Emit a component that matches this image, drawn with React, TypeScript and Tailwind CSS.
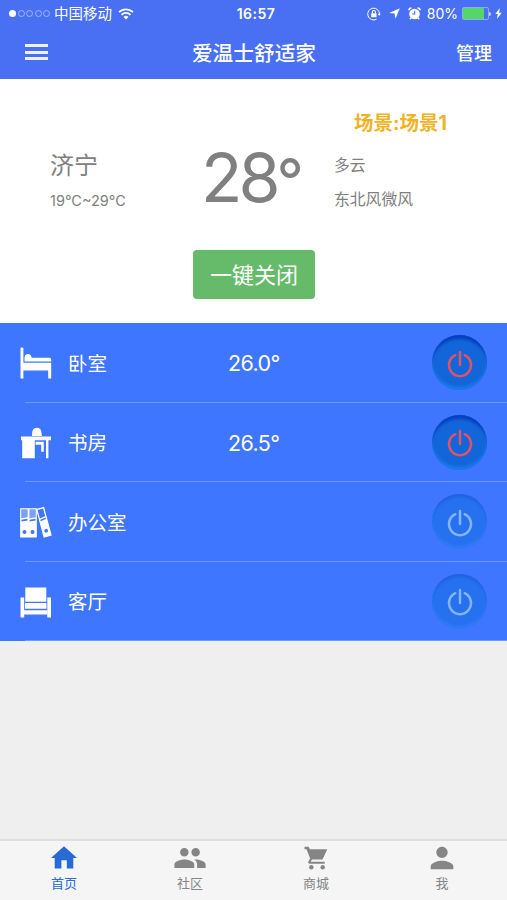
import { useState } from "react";
import type { ReactNode } from "react";
import { MdGroup, MdPerson } from "react-icons/md";

const BedIcon = () => (
  <svg width="32" height="32" viewBox="0 0 32 32" fill="white">
    <path d="M.5 1.500Q.5.5 1.900.5t1.500 1V15.800h27.800v15.700h-3V23.500H3.400v8H.5z" />
    <path d="M4.500 11C4.500 8.500 6 7 8 7s3.500 1.500 3.600 3.700h18q1.600 0 1.600 1.600v2.300H4.500z" />
  </svg>
);

const DeskIcon = () => (
  <svg width="32" height="32" viewBox="0 0 32 32" fill="white">
    <path d="M12 9V7.500Q12.200 5.500 12.300 4.500a4.600 4.600 0 0 1 9 0Q21.400 6 21.800 7.500V9z" />
    <path d="M1 9.500h30v3.700H1zM2.200 13h12.600v18.200H2.200z" />
    <path d="M15.600 14.700h8.200v10.100h-2.600v-7h-5.600zM26 13h2.400v18.200H26z" />
  </svg>
);

const BindersIcon = () => (
  <svg width="32" height="33" viewBox="0 0 32 33" fill="none" stroke="white">
    <path d="M.8 2.800h7.300v28H.8zM8.900 2.800h7.300v28H8.900z" strokeWidth="1.300" />
    <path d="M1 15.500l7-1v16.500H1zM9 15.500l7-1v16.500H9z" fill="white" stroke="none" />
    <path d="M2 4h5v7.700l-5 .8zM10 4h5v7.700l-5 .8z" fill="white" fillOpacity=".3" stroke="none" />
    <path d="M1 13l7-1M9 13l7-1" strokeWidth="1.500" />
    <circle cx="4.500" cy="26" r="2" fill="#3f76ff" stroke="none" />
    <circle cx="12.500" cy="26" r="2" fill="#3f76ff" stroke="none" />
    <g transform="rotate(-15 24 16)">
      <path d="M20.300 2h7v28.500h-7z" strokeWidth="1.300" />
      <path d="M20.300 14.500l7-1v17h-7z" fill="white" stroke="none" />
      <path d="M20.300 12.300l7-1" strokeWidth="1.500" />
      <circle cx="23.800" cy="25" r="1.900" fill="#3f76ff" stroke="none" />
    </g>
  </svg>
);

const SofaIcon = () => (
  <svg width="32" height="32" viewBox="0 0 32 32" fill="white">
    <path d="M5.300 1.500h21v14.300h-21zM5 17h21.500v5.700H5zM4 24.200h23.500v4.300H4z" />
    <path d="M.5 11.500h3.700v20H.5zM27.300 11.500H31v20h-3.700z" />
  </svg>
);

const WifiIcon = () => (
  <svg width="16" height="12" viewBox="0 0 16 12" fill="none" stroke="white" strokeWidth="1.700">
    <path d="M1 4.200a10 10 0 0 1 14 0M3.500 6.800a6.400 6.400 0 0 1 9 0" />
    <path d="M5.500 9a3.600 3.600 0 0 1 5 0L8 11.500z" fill="white" stroke="none" />
  </svg>
);

const RotationLockIcon = () => (
  <svg width="14" height="14" viewBox="0 0 14 14" fill="none" stroke="white">
    <path d="M9.500 12.200A5.900 5.900 0 1 1 12.500 7.500" strokeWidth="1" />
    <path d="M10.700 6.700h3L12.200 9z" fill="white" stroke="none" />
    <path d="M4.200 6.300h5.300v3.900H4.200z" fill="white" stroke="none" />
    <path d="M5.400 6.500V5a1.500 1.500 0 0 1 3 0v1.500" strokeWidth="1.100" />
  </svg>
);

const LocationIcon = () => (
  <svg width="11" height="11" viewBox="0 0 11 11" fill="white">
    <path d="M10.800.2L6.500 10.700 5.600 5.500.2 5z" />
  </svg>
);

const AlarmIcon = () => (
  <svg width="13" height="13" viewBox="0 0 12 12" fill="none" stroke="white">
    <circle cx="6" cy="6.500" r="4.900" fill="white" stroke="none" />
    <path d="M.8 3Q1 1 3.200.9M11.200 3Q11 1 8.800.9M2.800 10l-1 1.300M9.200 10l1 1.300" strokeWidth="1.500" />
    <path d="M6.200 3.500v3H4" stroke="#496ff2" strokeWidth="1" />
  </svg>
);

const BoltIcon = () => (
  <svg width="7" height="11" viewBox="0 0 7 11" fill="white">
    <path d="M4.800 0L.3 6h2.500L2 11l4.700-6.300H4.100z" />
  </svg>
);

const HomeIcon = () => (
  <svg width="26" height="23" viewBox="0 0 26 23" fill="currentColor">
    <path d="M13 .3L26 12h-3.700v10.600h-6.500v-8.300h-5.400v8.300H3.700V12H0z" />
  </svg>
);

const CartIcon = () => (
  <svg width="24" height="24" viewBox="0 0 24 24" fill="currentColor">
    <path d="M.5.800h4.200l1.200 2.500h17.400L18.500 13.500H8l-1.300 2.200h14v2H5.500q-2-.3-1.200-2.100l1.800-3L2.500 3.300h-2z" />
    <circle cx="7.300" cy="21.200" r="2.200" />
    <circle cx="18.700" cy="21.200" r="2.200" />
  </svg>
);

type Room = { name: string; temp: string; on: boolean; icon: ReactNode };

const initialRooms: Room[] = [
  { name: "卧室", temp: "26.0°", on: true, icon: <BedIcon /> },
  { name: "书房", temp: "26.5°", on: true, icon: <DeskIcon /> },
  { name: "办公室", temp: "", on: false, icon: <BindersIcon /> },
  { name: "客厅", temp: "", on: false, icon: <SofaIcon /> },
];

const tabs = [
  { label: "首页", icon: <HomeIcon /> },
  { label: "社区", icon: <MdGroup size={34} /> },
  { label: "商城", icon: <CartIcon /> },
  { label: "我", icon: <MdPerson size={34} /> },
];

function PowerButton({ on, onClick }: { on: boolean; onClick: () => void }) {
  return (
    <button
      type="button"
      onClick={onClick}
      className={`mt-px flex size-[55px] items-center justify-center rounded-full ${
        on
          ? "bg-[#1366d9] shadow-[inset_0_6px_3px_-2px_#0640bf,inset_0_-4px_3px_-1px_#1b7bea]"
          : "bg-[#2671ef] shadow-[inset_0_5px_3px_-2px_#2260e2,inset_0_-4px_3px_-1px_#2f7bf8]"
      }`}
    >
      <svg
        width="26"
        height="28"
        viewBox="0 0 26 28"
        fill="none"
        stroke={on ? "#dc5468" : "#86b4fb"}
        strokeWidth="2.500"
        strokeLinecap="round"
        className="mt-0.5"
      >
        <path d="M13 2v13M8.300 5.200a11 11 0 1 0 9.400 0" />
      </svg>
    </button>
  );
}

export default function App() {
  const [rooms, setRooms] = useState(initialRooms);
  const [activeTab, setActiveTab] = useState(0);

  const toggleRoom = (index: number) =>
    setRooms((prev) => prev.map((room, i) => (i === index ? { ...room, on: !room.on } : room)));

  const closeAll = () => setRooms((prev) => prev.map((room) => ({ ...room, on: false })));

  return (
    <div className="flex h-[900px] w-[507px] flex-col overflow-hidden bg-[#efefef] font-['Inter','Noto_Sans_CJK_SC',sans-serif]">
      {/* Header */}
      <header className="h-[79px] shrink-0 bg-[#496ff2] text-white">
        <div className="grid h-[27px] grid-cols-[1fr_auto_1fr] items-center pl-[9px] pr-[5px] text-[13.500px]">
          <div className="flex items-center">
            <div className="flex gap-[1.500px]">
              <span className="size-[7px] rounded-full bg-white" />
              {[1, 2, 3, 4].map((dot) => (
                <span key={dot} className="size-[7px] rounded-full border border-white/45" />
              ))}
            </div>
            <span className="ml-1 mr-[6px] text-[14.500px]">中国移动</span>
            <WifiIcon />
          </div>
          <span className="pl-px text-[14px] font-semibold tracking-[0.500px]">16:57</span>
          <div className="flex items-center justify-end">
            <RotationLockIcon />
            <span className="ml-2"><LocationIcon /></span>
            <span className="ml-2"><AlarmIcon /></span>
            <span className="ml-[6px] text-[14px]">80%</span>
            <span className="ml-1 flex h-[13px] w-[27px] rounded-[2px] border border-white/40">
              <span className="w-[21px] bg-[#53d867]" />
            </span>
            <span className="mr-1 h-1 w-[2px] rounded-r bg-white/70" />
            <BoltIcon />
          </div>
        </div>
        <div className="flex h-[50px] items-center justify-between pl-[25px] pr-[15px]">
          <button type="button" className="flex w-[23px] flex-col gap-[3.500px]">
            <span className="h-[3px] bg-white/90" />
            <span className="h-[3px] bg-white/90" />
            <span className="h-[3px] bg-white/90" />
          </button>
          <h1 className="ml-[4px] pt-[3px] text-[20.700px] font-medium">爱温士舒适家</h1>
          <button type="button" className="pt-[3px] text-[18px] font-medium">管理</button>
        </div>
      </header>

      {/* Weather */}
      <section className="flex h-[244px] shrink-0 flex-col bg-white pt-[29px] text-[#808080]">
        <p className="pl-[354px] text-[19.500px] font-bold leading-[30px] text-[#f0b323]">场景:场景1</p>
        <div className="flex h-[90px] pl-[50px]">
          <div className="w-[151px] pt-[11px]">
            <p className="text-[24px] leading-[34px]">济宁</p>
            <p className="mt-[8px] text-[14.500px] leading-[20px]">19°C~29°C</p>
          </div>
          <p className="w-[133px] text-[68px] font-normal leading-[78px] tracking-[-4px]">
            28<span className="text-[60px]">°</span>
          </p>
          <div className="pt-[17px] text-[15.800px] leading-[22px]">
            <p>多云</p>
            <p className="mt-[12px]">东北风微风</p>
          </div>
        </div>
        <button
          type="button"
          onClick={closeAll}
          className="ml-[193px] mt-[22px] h-[49px] w-[122px] rounded bg-[#66bb6a] pt-0.5 text-[22px] text-white"
        >
          一键关闭
        </button>
      </section>

      {/* Rooms */}
      <ul className="flex h-[318px] shrink-0 flex-col bg-[#3f76ff] text-[19.500px] text-white">
        {rooms.map((room, i) => (
          <li key={room.name} className="flex flex-1 flex-col">
            <div className="flex flex-1 items-center pl-[20px] pr-[20px]">
              <span className="w-[48px] pt-[2px]">{room.icon}</span>
              <span className="w-[160px] pt-[4px]">{room.name}</span>
              <span className="flex-1 pt-[2px] text-[21.500px] tracking-[-0.600px]">{room.temp}</span>
              <PowerButton on={room.on} onClick={() => toggleRoom(i)} />
            </div>
            <div className="ml-[25px] h-px bg-[#6e97ff]" />
          </li>
        ))}
      </ul>

      {/* Tab bar */}
      <nav className="mt-auto flex h-[61px] border-t-2 border-[#dedede] bg-[#f5f5f5] pl-px pr-[2px]">
        {tabs.map((tab, i) => (
          <button
            key={tab.label}
            type="button"
            onClick={() => setActiveTab(i)}
            className={`flex flex-1 flex-col items-center text-[13px] leading-[18px] ${
              activeTab === i ? "text-[#276bd7]" : "text-[#858585]"
            }`}
          >
            <span className="flex h-[33px] items-center">{tab.icon}</span>
            {tab.label}
          </button>
        ))}
      </nav>
    </div>
  );
}
